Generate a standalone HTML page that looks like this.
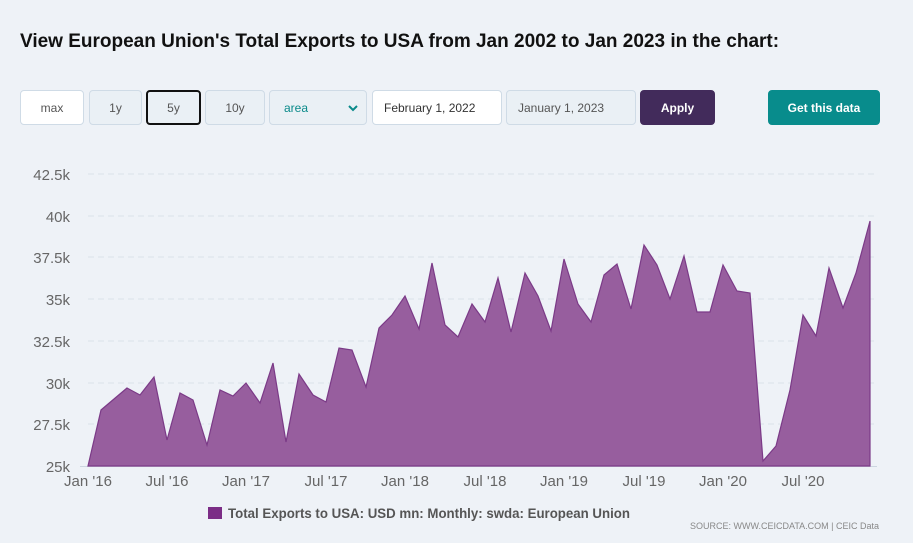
<!DOCTYPE html>
<html><head><style>
body{margin:0;width:913px;height:543px;background:#eef2f7;font-family:"Liberation Sans",sans-serif;position:relative;overflow:hidden}
h1{position:absolute;left:20px;top:31px;margin:0;font-size:19px;font-weight:bold;color:#111;white-space:nowrap;letter-spacing:0px}
.b{position:absolute;top:90px;height:35px;box-sizing:border-box;border:1px solid #cfdbe6;border-radius:4px;background:#eaf0f5;font-size:12px;color:#555;display:flex;align-items:center;justify-content:center}
</style></head><body>
<h1>View European Union's Total Exports to USA from Jan 2002 to Jan 2023 in the chart:</h1>
<div class="b" style="left:20px;width:64px;background:#fff">max</div>
<div class="b" style="left:89px;width:53px">1y</div>
<div class="b" style="left:146px;width:55px;border:2px solid #111;background:#eaf0f5">5y</div>
<div class="b" style="left:205px;width:60px">10y</div>
<div class="b" style="left:269px;width:98px;justify-content:space-between;padding:0 8px 0 14px;color:#0a8a8a">area<svg width="10" height="8" viewBox="0 0 10 8"><path d="M1 2l4 4 4-4" stroke="#0a8a8a" stroke-width="2" fill="none"/></svg></div>
<div class="b" style="left:372px;width:130px;background:#fff;justify-content:flex-start;padding-left:11px;color:#333">February 1, 2022</div>
<div class="b" style="left:506px;width:130px;justify-content:flex-start;padding-left:11px;color:#555">January 1, 2023</div>
<div class="b" style="left:640px;width:75px;background:#422b5b;border-color:#422b5b;color:#fff;font-weight:bold">Apply</div>
<div class="b" style="left:768px;width:112px;background:#088c8c;border-color:#088c8c;color:#fff;font-weight:bold">Get this data</div>
<svg style="position:absolute;left:0;top:0" width="913" height="543">
<g stroke="#dbe2ea" stroke-dasharray="6,4" stroke-width="1">
<line x1="88" x2="877" y1="174" y2="174"/><line x1="88" x2="877" y1="216" y2="216"/><line x1="88" x2="877" y1="257" y2="257"/><line x1="88" x2="877" y1="299" y2="299"/><line x1="88" x2="877" y1="341" y2="341"/><line x1="88" x2="877" y1="383" y2="383"/><line x1="88" x2="877" y1="424" y2="424"/>
</g>
<line x1="80" x2="877" y1="466.5" y2="466.5" stroke="#ccd6e0"/>
<g font-size="15" fill="#666" text-anchor="end">
<text x="70" y="180">42.5k</text><text x="70" y="222">40k</text><text x="70" y="263">37.5k</text><text x="70" y="305">35k</text><text x="70" y="347">32.5k</text><text x="70" y="389">30k</text><text x="70" y="430">27.5k</text><text x="70" y="472">25k</text>
</g>
<polygon fill="#975e9e" stroke="#7b3a87" stroke-width="1.2" points="88,466 101,410 114,399 127,388 140,395 154,377 167,440 180,393 193,400 207,445 220,390 233,396 246,383 260,403 273,363 286,442 299,374 313,395 326,402 339,348 352,350 366,387 379,328 392,315 405,296 419,329 432,263 445,325 458,337 472,304 485,322 498,278 511,332 525,273 538,296 551,331 564,259 578,304 591,322 604,275 617,264 631,309 644,245 657,265 670,299 684,256 697,312 710,312 723,265 737,291 750,293 763,461 776,446 790,390 803,315 816,336 829,268 843,308 856,273 870,221 870,466"/>
<g font-size="15" fill="#666" text-anchor="middle">
<text x="88" y="486">Jan '16</text><text x="167" y="486">Jul '16</text><text x="246" y="486">Jan '17</text><text x="326" y="486">Jul '17</text><text x="405" y="486">Jan '18</text><text x="485" y="486">Jul '18</text><text x="564" y="486">Jan '19</text><text x="644" y="486">Jul '19</text><text x="723" y="486">Jan '20</text><text x="803" y="486">Jul '20</text>
</g>
<rect x="208" y="507" width="14" height="12" fill="#7b2d86"/>
<text x="228" y="518" font-size="13.5" fill="#555" font-weight="bold" textLength="402" lengthAdjust="spacingAndGlyphs">Total Exports to USA: USD mn: Monthly: swda: European Union</text>
<text x="879" y="529" font-size="9" fill="#888" text-anchor="end">SOURCE: WWW.CEICDATA.COM | CEIC Data</text>
</svg>
</body></html>
